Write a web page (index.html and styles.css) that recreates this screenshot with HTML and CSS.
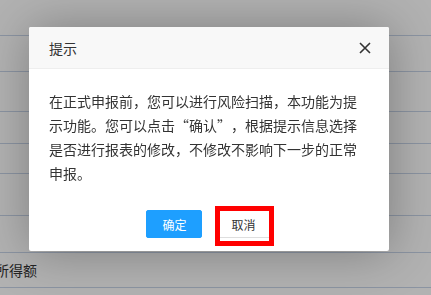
FILE: index.html
```html
<!DOCTYPE html>
<html lang="zh-CN">
<head>
    <meta charset="UTF-8">
    <title>提示</title>
    <link rel="stylesheet" href="styles.css">
</head>
<body>
    <div class="page">
        <div class="row" style="height: 36px;"></div>
        <div class="row" style="height: 36px;"></div>
        <div class="row" style="height: 40px;"></div>
        <div class="row" style="height: 32px;"></div>
        <div class="row" style="height: 30px;"></div>
        <div class="row" style="height: 42px;"></div>
        <div class="row" style="height: 37px;"></div>
        <div class="row label-row" style="height: 35px;"><span>所得额</span></div>
    </div>

    <div class="shade"></div>
    <div class="layer">
        <div class="layer-title">
            提示
            <a class="layer-close" href="#">
                <svg width="12" height="12" viewBox="0 0 12 12">
                    <path d="M1 1 L11 11 M11 1 L1 11" stroke="#333" stroke-width="1.6" fill="none"/>
                </svg>
            </a>
        </div>
        <div class="layer-content">在正式申报前，您可以进行风险扫描，本功能为提示功能。您可以点击<span class="q-open">“</span>确认<span class="q-close">”</span>，根据提示信息选择是否进行报表的修改，不修改不影响下一步的正常申报。</div>
        <div class="layer-btn">
            <a class="btn btn-primary" href="#">确定</a>
            <a class="btn btn-cancel" href="#">取消<span class="mark"></span></a>
        </div>
    </div>
</body>
</html>
```

FILE: styles.css
```css
body {
    margin: 0;
    font-family: "Microsoft YaHei", "Noto Sans CJK SC", sans-serif;
    font-size: 14px;
    color: #333;
    background-color: #fff;
    overflow: hidden;
}
.page {
    width: 431px;
}
.row {
    box-sizing: border-box;
    border-bottom: 1px solid #c8d4e8;
}
.label-row {
    display: flex;
    align-items: center;
}
.label-row span {
    margin-left: -5px;
    font-size: 14px;
}
.shade {
    position: fixed;
    top: 0;
    left: 0;
    width: 100%;
    height: 100%;
    background-color: rgba(0, 0, 0, 0.3);
}
.layer {
    position: absolute;
    top: 27px;
    left: 29px;
    width: 360px;
    background-color: #fff;
    border-radius: 2px;
    box-shadow: 1px 1px 50px rgba(0, 0, 0, 0.3);
}
.layer-title {
    position: relative;
    height: 41px;
    line-height: 42px;
    padding: 0 80px 0 20px;
    border-bottom: 1px solid #eee;
    background-color: #f8f8f8;
    border-radius: 2px 2px 0 0;
    font-size: 14px;
    color: #333;
}
.layer-close {
    position: absolute;
    top: 15px;
    right: 18px;
    width: 12px;
    height: 12px;
    display: block;
}
.layer-close svg {
    display: block;
}
.layer-content {
    padding: 20px;
    line-height: 24px;
    font-size: 14px;
    color: #333;
}
.q-open,
.q-close {
    display: inline-block;
    width: 1em;
}
.q-open {
    text-align: right;
}
.q-close {
    text-align: left;
}
.layer-btn {
    text-align: center;
    padding: 0 15px 13px;
}
.btn {
    display: inline-block;
    position: relative;
    height: 28px;
    line-height: 28px;
    margin: 5px 5px 0;
    padding: 0 15px;
    border: 1px solid #dedede;
    border-radius: 2px;
    font-size: 12px;
    color: #333;
    text-decoration: none;
    vertical-align: top;
    box-sizing: border-box;
}
.btn-primary {
    background-color: #1e9fff;
    border-color: #1e9fff;
    color: #fff;
}
.btn-cancel {
    background-color: #fff;
}
.mark {
    position: absolute;
    top: -5px;
    left: -2px;
    right: -3px;
    bottom: -9px;
    border: 5px solid #ff0000;
}
```
